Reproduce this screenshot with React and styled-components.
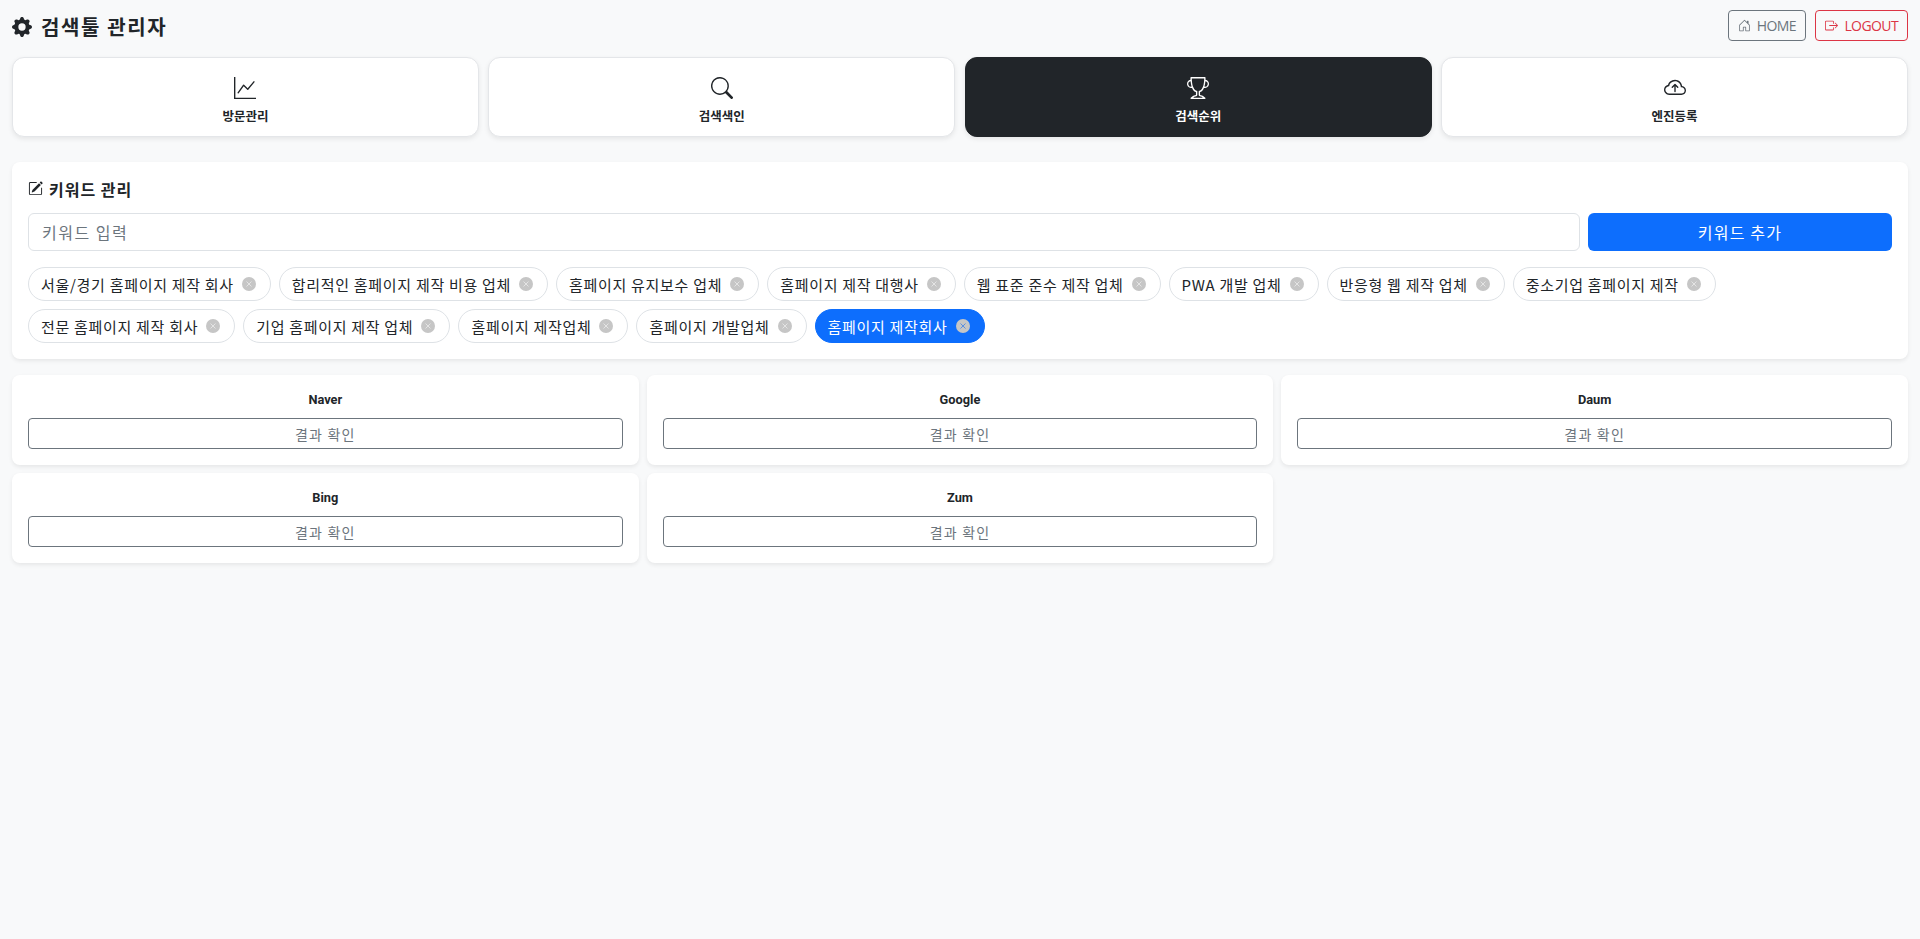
import React from 'react';
import styled, { createGlobalStyle } from 'styled-components';
import {
  BsGearFill,
  BsHouseDoor,
  BsBoxArrowRight,
  BsGraphUp,
  BsSearch,
  BsTrophy,
  BsCloudArrowUp,
  BsPencilSquare,
} from 'react-icons/bs';

const FONT = `"Noto Sans CJK KR", "Open Sans", "Noto Sans", sans-serif`;
const LATIN_FONT = `"Open Sans", "Noto Sans", sans-serif`;

const GlobalStyle = createGlobalStyle`
  * { box-sizing: border-box; }
  body {
    margin: 0;
    background: #f8f9fa;
    color: #212529;
    font-family: ${FONT};
    font-size: 16px;
  }
`;

const Page = styled.div`
  min-height: 939px;
  padding: 10px 12px;
`;

const Header = styled.header`
  display: flex;
  justify-content: space-between;
  align-items: center;
  height: 31px;
  margin-bottom: 16px;
`;

const Title = styled.h1`
  display: flex;
  align-items: center;
  gap: 9px;
  margin: 0;
  padding-top: 3px;
  font-size: 20px;
  font-weight: 600;
  line-height: 1;
  letter-spacing: 1.6px;
`;

const HeaderActions = styled.div`
  display: flex;
  gap: 9.5px;
`;

const HeaderButton = styled.button`
  display: flex;
  align-items: center;
  gap: 6px;
  height: 31px;
  padding: 0 9px;
  background: transparent;
  border: 1px solid ${(props) => props.$color};
  border-radius: 4px;
  color: ${(props) => props.$color};
  font-family: ${LATIN_FONT};
  font-size: 14px;
  letter-spacing: -0.6px;
`;

const NavGrid = styled.nav`
  display: grid;
  grid-template-columns: repeat(4, 1fr);
  gap: 9.6px;
  margin-bottom: 25px;
`;

const NavCard = styled.div`
  display: flex;
  flex-direction: column;
  align-items: center;
  height: 80px;
  padding-top: 19px;
  background: ${(props) => (props.$active ? '#212529' : '#fff')};
  color: ${(props) => (props.$active ? '#fff' : '#212529')};
  border: 1px solid ${(props) => (props.$active ? '#212529' : '#e4e6e9')};
  border-radius: 12px;
  box-shadow: 0 2px 5px rgba(0, 0, 0, 0.08);
  svg { display: block; }
`;

const NavLabel = styled.span`
  margin-top: 8px;
  font-size: 12.5px;
  font-weight: 700;
  line-height: 18px;
`;

const Panel = styled.section`
  padding: 16px;
  margin-bottom: 16px;
  background: #fff;
  border-radius: 8px;
  box-shadow: 0 2px 4px rgba(0, 0, 0, 0.075);
`;

const PanelTitle = styled.h2`
  display: flex;
  align-items: center;
  gap: 6px;
  margin: 0 0 14px;
  height: 21px;
  font-size: 16px;
  font-weight: 600;
  letter-spacing: 1px;
`;

const InputRow = styled.div`
  display: flex;
  gap: 8px;
  margin-bottom: 16px;
`;

const KeywordInput = styled.input`
  flex: 1;
  height: 38px;
  padding: 6px 13px;
  border: 1px solid #dee2e6;
  border-radius: 6px;
  font-family: ${FONT};
  font-size: 16px;
  letter-spacing: 1.5px;
  &::placeholder { color: #6c757d; opacity: 1; }
`;

const AddButton = styled.button`
  width: 304px;
  height: 38px;
  background: #0d6efd;
  border: 0;
  border-radius: 6px;
  color: #fff;
  font-family: ${FONT};
  font-size: 16px;
  letter-spacing: 1.2px;
`;

const ChipList = styled.div`
  display: flex;
  flex-wrap: wrap;
  gap: 8px;
`;

const Chip = styled.span`
  display: inline-flex;
  align-items: center;
  gap: 8px;
  height: 34px;
  padding: 0 14px 0 12px;
  background: ${(props) => (props.$active ? '#0d6efd' : '#fff')};
  color: ${(props) => (props.$active ? '#fff' : '#212529')};
  border: 1px solid ${(props) => (props.$active ? '#0d6efd' : '#dee2e6')};
  border-radius: 17px;
  font-size: 15px;
  letter-spacing: 0.7px;
`;

const CloseDot = styled.svg`
  flex: none;
  width: 14px;
  height: 14px;
  circle { fill: #c6c6c6; }
  path {
    fill: none;
    stroke: ${(props) => (props.$active ? '#5b8fe0' : '#e4e4e4')};
    stroke-width: 1;
  }
`;

const EngineGrid = styled.div`
  display: grid;
  grid-template-columns: repeat(3, 1fr);
  gap: 8px;
`;

const EngineCard = styled.div`
  padding: 16px;
  height: 90px;
  background: #fff;
  border-radius: 8px;
  box-shadow: 0 2px 4px rgba(0, 0, 0, 0.075);
  text-align: center;
`;

const EngineName = styled.div`
  height: 19px;
  margin-bottom: 8px;
  font-family: Roboto, ${LATIN_FONT};
  font-size: 12.8px;
  font-weight: 700;
  line-height: 18px;
`;

const ResultButton = styled.button`
  width: 100%;
  height: 31px;
  background: transparent;
  border: 1px solid #6c757d;
  border-radius: 4px;
  color: #6c757d;
  font-family: ${FONT};
  font-size: 14px;
  letter-spacing: 1.2px;
`;

const NAV_ITEMS = [
  { label: '방문관리', Icon: BsGraphUp },
  { label: '검색색인', Icon: BsSearch },
  { label: '검색순위', Icon: BsTrophy, active: true },
  { label: '엔진등록', Icon: BsCloudArrowUp },
];

const KEYWORDS = [
  '서울/경기 홈페이지 제작 회사',
  '합리적인 홈페이지 제작 비용 업체',
  '홈페이지 유지보수 업체',
  '홈페이지 제작 대행사',
  '웹 표준 준수 제작 업체',
  'PWA 개발 업체',
  '반응형 웹 제작 업체',
  '중소기업 홈페이지 제작',
  '전문 홈페이지 제작 회사',
  '기업 홈페이지 제작 업체',
  '홈페이지 제작업체',
  '홈페이지 개발업체',
  '홈페이지 제작회사',
];

const ENGINES = ['Naver', 'Google', 'Daum', 'Bing', 'Zum'];

export default function App() {
  return (
    <Page>
      <GlobalStyle />
      <Header>
        <Title>
          <BsGearFill size={20} />
          검색툴 관리자
        </Title>
        <HeaderActions>
          <HeaderButton $color="#6c757d">
            <BsHouseDoor size={13} />
            HOME
          </HeaderButton>
          <HeaderButton $color="#dc3545">
            <BsBoxArrowRight size={13} />
            LOGOUT
          </HeaderButton>
        </HeaderActions>
      </Header>

      <NavGrid>
        {NAV_ITEMS.map(({ label, Icon, active }) => (
          <NavCard key={label} $active={active}>
            <Icon size={22} />
            <NavLabel>{label}</NavLabel>
          </NavCard>
        ))}
      </NavGrid>

      <Panel>
        <PanelTitle>
          <BsPencilSquare size={15} />
          키워드 관리
        </PanelTitle>
        <InputRow>
          <KeywordInput placeholder="키워드 입력" />
          <AddButton>키워드 추가</AddButton>
        </InputRow>
        <ChipList>
          {KEYWORDS.map((keyword, i) => {
            const active = i === KEYWORDS.length - 1;
            return (
              <Chip key={keyword} $active={active}>
                {keyword}
                <CloseDot viewBox="0 0 14 14" $active={active}>
                  <circle cx="7" cy="7" r="7" />
                  <path d="M4.5 4.5l5 5M9.5 4.5l-5 5" />
                </CloseDot>
              </Chip>
            );
          })}
        </ChipList>
      </Panel>

      <EngineGrid>
        {ENGINES.map((name) => (
          <EngineCard key={name}>
            <EngineName>{name}</EngineName>
            <ResultButton>결과 확인</ResultButton>
          </EngineCard>
        ))}
      </EngineGrid>
    </Page>
  );
}
